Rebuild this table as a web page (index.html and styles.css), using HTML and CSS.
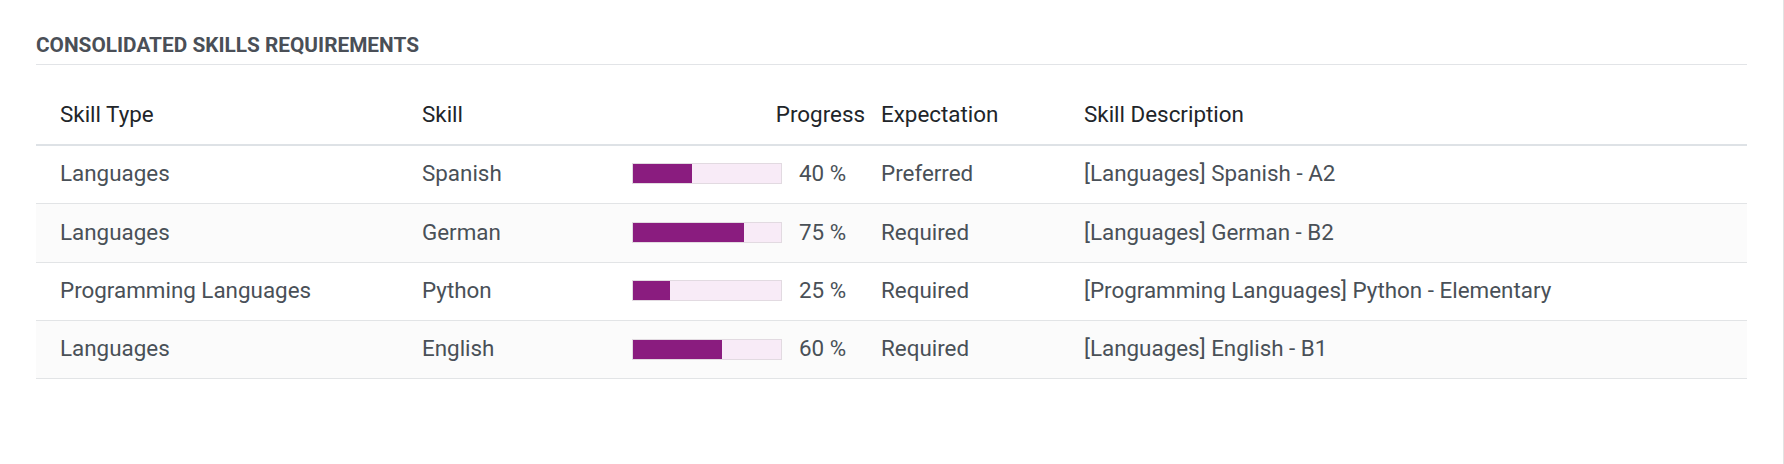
FILE: index.html
```html
<!DOCTYPE html>
<html lang="en">
<head>
<meta charset="utf-8">
<title>Consolidated Skills Requirements</title>
<link rel="stylesheet" href="styles.css">
</head>
<body>
<div class="sheet">
  <h2 class="separator">Consolidated Skills Requirements</h2>
  <table class="skills">
    <colgroup>
      <col class="c-type">
      <col class="c-skill">
      <col class="c-progress">
      <col class="c-expect">
      <col class="c-desc">
    </colgroup>
    <thead>
      <tr>
        <th class="first">Skill Type</th>
        <th>Skill</th>
        <th class="right">Progress</th>
        <th>Expectation</th>
        <th>Skill Description</th>
      </tr>
    </thead>
    <tbody>
      <tr>
        <td class="first">Languages</td>
        <td>Spanish</td>
        <td><div class="prog"><div class="bar"><div class="fill" style="width:40%"></div></div><span class="pct">40 %</span></div></td>
        <td>Preferred</td>
        <td>[Languages] Spanish - A2</td>
      </tr>
      <tr>
        <td class="first">Languages</td>
        <td>German</td>
        <td><div class="prog"><div class="bar"><div class="fill" style="width:75%"></div></div><span class="pct">75 %</span></div></td>
        <td>Required</td>
        <td>[Languages] German - B2</td>
      </tr>
      <tr>
        <td class="first">Programming Languages</td>
        <td>Python</td>
        <td><div class="prog"><div class="bar"><div class="fill" style="width:25%"></div></div><span class="pct">25 %</span></div></td>
        <td>Required</td>
        <td>[Programming Languages] Python - Elementary</td>
      </tr>
      <tr>
        <td class="first">Languages</td>
        <td>English</td>
        <td><div class="prog"><div class="bar"><div class="fill" style="width:60%"></div></div><span class="pct">60 %</span></div></td>
        <td>Required</td>
        <td>[Languages] English - B1</td>
      </tr>
    </tbody>
  </table>
</div>
</body>
</html>
```

FILE: styles.css
```css
html, body {
  margin: 0;
  padding: 0;
  background: #ffffff;
}

body {
  font-family: Roboto, "Liberation Sans", Arial, sans-serif;
  font-size: 22.4px;
  color: #495057;
}

.sheet {
  box-sizing: border-box;
  width: 1784px;
  min-height: 464px;
  padding: 33px 36px 0 36px;
  border-right: 1px solid #e3e3e3;
}

.separator {
  margin: 0;
  padding: 0 0 5.5px 0;
  font-size: 20.8px;
  line-height: 25px;
  font-weight: 700;
  text-transform: uppercase;
  color: #4a4f57;
  border-bottom: 1px solid #e2e4e7;
}

.skills {
  width: 100%;
  margin-top: 21px;
  border-collapse: collapse;
  table-layout: fixed;
}

.c-type { width: 378px; }
.c-skill { width: 206px; }
.c-progress { width: 253px; }
.c-expect { width: 203px; }

.skills th,
.skills td {
  padding: 11.2px 8px 12.6px 8px;
  line-height: 33.6px;
  text-align: left;
  vertical-align: middle;
  white-space: nowrap;
}

.skills th {
  font-weight: 400;
  color: #212529;
  padding-top: 12px;
  padding-bottom: 12.9px;
  border-bottom: 2px solid #dee2e6;
}

.skills td {
  border-bottom: 1px solid #e2e4e6;
}

.skills .first {
  padding-left: 24px;
}

.skills .right {
  text-align: right;
}

.skills tbody tr:nth-child(even) td {
  background: #fbfbfb;
}

.prog {
  display: flex;
  align-items: center;
  padding-left: 4px;
}

.bar {
  box-sizing: border-box;
  width: 150px;
  height: 21px;
  border: 1px solid #e2dae1;
  background: #f8ebf7;
}

.fill {
  height: 100%;
  background: #8a1c7f;
}

.pct {
  margin-left: 17px;
}
```
